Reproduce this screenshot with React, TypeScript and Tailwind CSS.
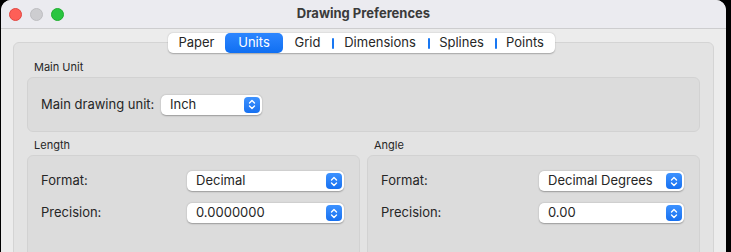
import React from 'react';

const font = { fontFamily: 'Inter, "Noto Sans", sans-serif' };

const tabs = [
  { label: 'Paper', w: 'w-[57px]' },
  { label: 'Units', w: 'w-[58px]' },
  { label: 'Grid', w: 'w-[49px]' },
  { label: 'Dimensions', w: 'w-[96px]' },
  { label: 'Splines', w: 'w-[67px]' },
  { label: 'Points', w: 'w-[60px]' },
];

function Stepper() {
  return (
    <div className="w-[16px] h-[16px] rounded-[4px] bg-gradient-to-b from-[#3d92ff] to-[#1670f0] flex items-center justify-center">
      <svg width="8" height="11" viewBox="0 0 8 11" fill="none">
        <path d="M1.5 4 L4 1.5 L6.5 4" stroke="white" strokeWidth="1.4" strokeLinecap="round" strokeLinejoin="round" />
        <path d="M1.5 7 L4 9.5 L6.5 7" stroke="white" strokeWidth="1.4" strokeLinecap="round" strokeLinejoin="round" />
      </svg>
    </div>
  );
}

function Popup({ value, width }: { value: string; width: string }) {
  return (
    <div
      className={`${width} h-[20px] bg-white rounded-[5px] shadow-[0_0.5px_1.5px_rgba(0,0,0,0.3)] flex items-center justify-between pl-[9px] pr-[2px] text-[13px] text-[#262626]`}
    >
      <span>{value}</span>
      <Stepper />
    </div>
  );
}

function Row({ label, value, labelW, popupW }: { label: string; value: string; labelW: string; popupW: string }) {
  return (
    <div className="flex items-center">
      <span className={`${labelW} text-[13px] text-[#262626]`}>{label}</span>
      <Popup value={value} width={popupW} />
    </div>
  );
}

function Group({ title, children, className = '' }: { title: string; children: React.ReactNode; className?: string }) {
  return (
    <div className={className}>
      <div className="text-[11px] text-[#262626] pl-[7px] h-[16px] leading-[13px]">{title}</div>
      {children}
    </div>
  );
}

export default function App() {
  return (
    <div className="w-[731px] h-[252px] overflow-hidden bg-black" style={font}>
      <div className="ml-[1px] w-[725px] h-[320px] rounded-t-[10px] overflow-hidden bg-[#ececec]">
        {/* title bar */}
        <div className="relative h-[29px] bg-[#ebebf0] border-b border-[#cdcdcf] flex items-center justify-center">
          <div className="absolute left-[8px] top-[8px] flex gap-[8px]">
            <div className="w-[13px] h-[13px] rounded-full bg-[#fe5f57] border border-[#e14640]" />
            <div className="w-[13px] h-[13px] rounded-full bg-[#cdcdd0] border border-[#bdbdc0]" />
            <div className="w-[13px] h-[13px] rounded-full bg-[#29c540] border border-[#1fae2f]" />
          </div>
          <span className="text-[13px] font-bold text-[#3a3a3a]">Drawing Preferences</span>
        </div>

        {/* tabs */}
        <div className="relative z-10 flex justify-center mt-[4px] pr-[4px]">
          <div className="flex h-[20px] bg-white rounded-[5px] shadow-[0_0.5px_1.5px_rgba(0,0,0,0.28)] text-[13px] text-[#262626]">
            {tabs.map((t, i) => (
              <div
                key={t.label}
                className={`${t.w} relative flex items-center justify-center ${
                  t.label === 'Units' ? 'bg-gradient-to-b from-[#2c86ff] to-[#0f6ff2] text-white rounded-[5px]' : ''
                }`}
              >
                {i > 2 && <div className="absolute left-0 top-[5px] w-[2px] h-[11px] rounded bg-[#1877f2]" />}
                {t.label}
              </div>
            ))}
          </div>
        </div>

        {/* tab content */}
        <div className="mx-[12px] -mt-[11px] h-[300px] border border-[#d4d4d4] rounded-[6px] bg-[#e3e3e3] px-[13px] pt-[18px]">
          <Group title="Main Unit">
            <div className="h-[55px] border border-[#d2d2d2] rounded-[6px] bg-[#dcdcdc] flex items-center pl-[13px]">
              <Row label="Main drawing unit:" value="Inch" labelW="w-[120px]" popupW="w-[101px]" />
            </div>
          </Group>

          <div className="grid grid-cols-2 gap-[7px] mt-[7px]">
            <Group title="Length">
              <div className="h-[120px] border border-[#d2d2d2] rounded-[6px] bg-[#dcdcdc] pl-[13px] pt-[15px] flex flex-col gap-[12px]">
                <Row label="Format:" value="Decimal" labelW="w-[146px]" popupW="w-[157px]" />
                <Row label="Precision:" value="0.0000000" labelW="w-[146px]" popupW="w-[157px]" />
              </div>
            </Group>
            <Group title="Angle">
              <div className="h-[120px] border border-[#d2d2d2] rounded-[6px] bg-[#dcdcdc] pl-[13px] pt-[15px] flex flex-col gap-[12px]">
                <Row label="Format:" value="Decimal Degrees" labelW="w-[158px]" popupW="w-[145px]" />
                <Row label="Precision:" value="0.00" labelW="w-[158px]" popupW="w-[145px]" />
              </div>
            </Group>
          </div>
        </div>
      </div>
    </div>
  );
}
